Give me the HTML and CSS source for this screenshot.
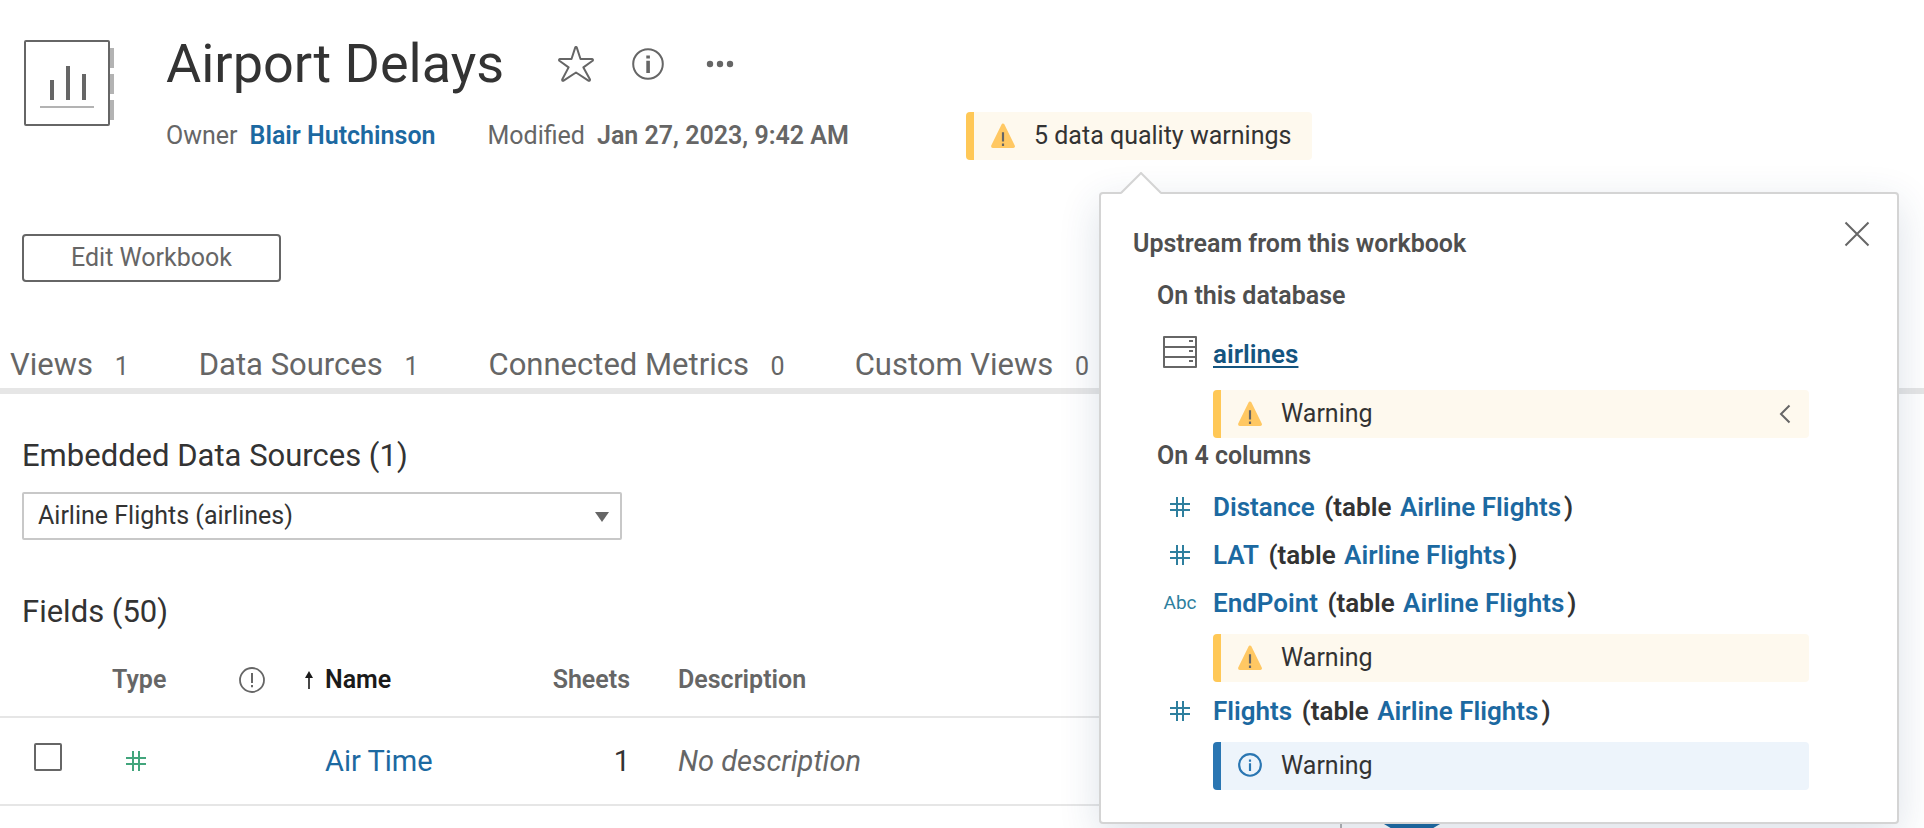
FILE: index.html
```html
<!DOCTYPE html>
<html lang="en">
<head>
<meta charset="utf-8">
<title>Airport Delays</title>
<link rel="stylesheet" href="styles.css">
</head>
<body>
<svg class="sprite" aria-hidden="true">
  <symbol id="i-warn" viewBox="0 0 24 24">
    <path d="M12 2 21.500 21.500H2.500Z" fill="#ffc863" stroke="#ffc863" stroke-width="3" stroke-linejoin="round"/>
    <path d="M12 8.500v8.500M12 19v2.200" stroke="#666" stroke-width="2" fill="none"/>
  </symbol>
  <symbol id="i-num" viewBox="0 0 20 20">
    <path d="M7 0v20M13 0v20M0 7h20M0 13h20" stroke="currentColor" stroke-width="2" fill="none"/>
  </symbol>
</svg>
<div class="page">
  <header class="head">
    <svg class="book" viewBox="0 0 90 86" aria-hidden="true">
      <path d="M86 8h4v20h-4zM86 34h4v20h-4zM86 60h4v20h-4z" fill="#b3b3b3"/>
      <rect x="1" y="1" width="84" height="84" rx="1" fill="#fff" stroke="#666" stroke-width="2"/>
      <path d="M28 40v20M44 26v34M60 34v26" stroke="#666" stroke-width="4"/>
      <path d="M16 67h54" stroke="#b3b3b3" stroke-width="2"/>
    </svg>
    <div class="head-text">
      <div class="title-row">
        <h1>Airport Delays</h1>
        <button class="icon-btn star" aria-label="Favorite"><svg width="36" height="36" viewBox="0 0 36 36"><path d="M17.200 1.600q.8-1.300 1.600 0L22.500 13 34 13q1.600.5.600 1.800L25.400 21.400 32 33.500q0 1.700-1.600 1.200L18 26.500 5.600 34.700Q4 35.200 4.200 33.500L10.600 21.400 1.400 14.800Q.4 13.500 2 13L13.500 13Z" fill="none" stroke="#666" stroke-width="2" stroke-linejoin="round"/></svg></button>
        <button class="icon-btn info" aria-label="Details"><svg width="32" height="32" viewBox="0 0 32 32"><circle cx="16" cy="16" r="14.800" fill="none" stroke="#666" stroke-width="2"/><path d="M14.300 7.500h3.600v3h-3.600zM14.300 12.800h3.600V25h-3.600z" fill="#666"/></svg></button>
        <button class="icon-btn more" aria-label="More actions"><svg width="28" height="8" viewBox="0 0 28 8"><circle cx="4" cy="4" r="3.200" fill="#666"/><circle cx="14" cy="4" r="3.200" fill="#666"/><circle cx="24" cy="4" r="3.200" fill="#666"/></svg></button>
      </div>
      <div class="meta-row">
        <span>Owner</span><a class="owner" href="#">Blair Hutchinson</a>
        <span class="modified">Modified</span><b>Jan 27, 2023, 9:42 AM</b>
      </div>
    </div>
    <div class="quality">
      <button class="notice notice-warn notice-btn"><svg class="n-icon"><use href="#i-warn"/></svg>5 data quality warnings</button>
      <section class="popover" aria-label="Data quality warnings">
        <svg class="pointer" viewBox="0 0 42 22" aria-hidden="true"><path d="M1 22 21 2 41 22Z" fill="#fff"/><path d="M1 21 21 1 41 21" fill="none" stroke="#d4d4d4" stroke-width="2"/></svg>
        <button class="close" aria-label="Close"><svg width="26" height="26" viewBox="0 0 26 26"><path d="M1.500 1.500l23 23M24.500 1.500l-23 23" stroke="#666" stroke-width="2"/></svg></button>
        <h2>Upstream from this workbook</h2>
        <h3>On this database</h3>
        <div class="asset database">
          <svg width="34" height="32" viewBox="0 0 34 32" aria-hidden="true"><path d="M1 1h32v30H1zM1 11h32M1 21h32" fill="none" stroke="#666" stroke-width="2" stroke-linejoin="round"/><path d="M26 5h4M26 15h4M26 25h4" stroke="#666" stroke-width="2"/></svg>
          <a class="db-link" href="#">airlines</a>
        </div>
        <div class="notice notice-warn"><svg class="n-icon"><use href="#i-warn"/></svg>Warning
          <button class="chev" aria-label="Expand"><svg width="12" height="20" viewBox="0 0 12 20"><path d="M10.500 1.500 2 10l8.500 8.500" fill="none" stroke="#666" stroke-width="2"/></svg></button>
        </div>
        <h3 class="tight">On 4 columns</h3>
        <div class="asset"><svg class="num"><use href="#i-num"/></svg><p><a href="#">Distance</a> (table <a href="#">Airline Flights</a>)</p></div>
        <div class="asset"><svg class="num"><use href="#i-num"/></svg><p><a href="#">LAT</a> (table <a href="#">Airline Flights</a>)</p></div>
        <div class="asset"><span class="abc">Abc</span><p><a href="#">EndPoint</a> (table <a href="#">Airline Flights</a>)</p></div>
        <div class="notice notice-warn"><svg class="n-icon"><use href="#i-warn"/></svg>Warning</div>
        <div class="asset after"><svg class="num"><use href="#i-num"/></svg><p><a href="#">Flights</a> (table <a href="#">Airline Flights</a>)</p></div>
        <div class="notice notice-info"><svg class="n-icon" viewBox="0 0 24 24"><circle cx="12" cy="11" r="10" fill="none" stroke="#2a76b2" stroke-width="2"/><path d="M12 6v2M12 9.500v7" stroke="#2a76b2" stroke-width="2"/></svg>Warning</div>
      </section>
    </div>
  </header>

  <div class="actions"><button class="edit">Edit Workbook</button></div>

  <nav class="tabs">
    <a href="#">Views <small>1</small></a>
    <a href="#">Data Sources <small>1</small></a>
    <a href="#">Connected Metrics <small>0</small></a>
    <a href="#">Custom Views <small>0</small></a>
  </nav>

  <div class="content">
    <main>
      <h2 class="section"><label for="source">Embedded Data Sources (1)</label></h2>
      <div class="select-wrap">
        <select id="source"><option>Airline Flights (airlines)</option></select>
        <svg class="caret" viewBox="0 0 14 10" aria-hidden="true"><path d="M0 0h14L7 10z" fill="#666"/></svg>
      </div>
      <h2 class="section fields">Fields (50)</h2>
      <table>
        <thead><tr>
          <th class="c-check"></th>
          <th class="c-type">Type</th>
          <th class="c-warn"><svg width="26" height="26" viewBox="0 0 26 26" role="img" aria-label="Warnings"><circle cx="13" cy="13" r="12" fill="none" stroke="#666" stroke-width="1.800"/><path d="M13 6v10M13 18v2.200" stroke="#666" stroke-width="2"/></svg></th>
          <th class="c-sort"><svg width="8" height="18" viewBox="0 0 8 18" aria-hidden="true"><path d="M4 3v15" stroke="#1a1a1a" stroke-width="1.600"/><path d="M4 0l4 7H0z" fill="#1a1a1a"/></svg></th>
          <th class="c-name">Name</th>
          <th class="c-sheets">Sheets</th>
          <th class="c-desc">Description</th>
        </tr></thead>
        <tbody><tr>
          <td class="c-check"><input type="checkbox" aria-label="Select Air Time"></td>
          <td class="c-type"><svg class="num"><use href="#i-num"/></svg></td>
          <td></td>
          <td></td>
          <td><a href="#">Air Time</a></td>
          <td class="c-sheets">1</td>
          <td class="c-desc"><em>No description</em></td>
        </tr></tbody>
      </table>
    </main>
    <aside><div class="bubble"></div></aside>
  </div>
</div>
</body>
</html>
```
FILE: styles.css
```css
* { box-sizing: border-box; }
body {
  margin: 0;
  background: #fff;
  color: #333;
  font: 400 25px/32px Roboto, "Liberation Sans", sans-serif;
}
h1, h2, h3, p { margin: 0; }
a { color: #1c69a1; text-decoration: none; }
button {
  margin: 0;
  padding: 0;
  border: 0;
  background: none;
  color: inherit;
  font: inherit;
}
svg { display: block; flex: none; }
.sprite { position: absolute; width: 0; height: 0; }
.page {
  display: flex;
  flex-direction: column;
  height: 100vh;
  overflow: hidden;
}

/* Header */
.head { display: flex; align-items: flex-start; padding: 32px 24px 0; }
.book { width: 90px; height: 86px; margin: 8px 52px 0 0; }
.head-text { width: 800px; }
.title-row { display: flex; align-items: center; height: 64px; }
h1 { font-weight: 400; font-size: 54px; line-height: 64px; width: 392px; white-space: nowrap; }
.star { margin-right: 38px; }
.info { margin-right: 42px; }
.meta-row {
  display: flex;
  align-items: baseline;
  margin-top: 24px;
  color: #666;
  white-space: nowrap;
}
.meta-row b { font-weight: 600; margin-left: 12px; }
.owner { font-weight: 600; margin: 0 52px 0 12px; }

/* Notices */
.notice {
  display: flex;
  align-items: center;
  height: 48px;
  padding: 0 18px 0 16px;
  border-left: 8px solid;
  border-radius: 4px;
  color: #333;
  white-space: nowrap;
}
.notice-warn { background: #fef9ee; border-left-color: #ffc857; }
.notice-info { background: #edf4fb; border-left-color: #2a76b2; }
.notice-btn { width: 346px; }
.n-icon { width: 26px; height: 26px; margin-right: 18px; }
.quality { position: relative; margin-top: 80px; }

/* Popover */
.popover {
  position: absolute;
  z-index: 2;
  top: 80px;
  left: 133px;
  width: 800px;
  padding: 34px 88px 32px 32px;
  background: #fff;
  border: 2px solid #d4d4d4;
  border-radius: 4px;
  box-shadow: 0 12px 40px rgba(40, 70, 110, .16);
}
.pointer { position: absolute; top: -22px; left: 19px; width: 42px; height: 22px; }
.close { position: absolute; top: 27px; right: 27px; }
.popover h2, .popover h3 { font-size: 25px; line-height: 32px; font-weight: 600; color: #4f4f4f; }
.popover h3 { margin: 20px 0 0 24px; }
.popover h3.tight { margin-top: 2px; }
.popover .notice { margin-left: 80px; }
.popover .asset + .notice { margin-top: 15px; }
.asset {
  display: grid;
  grid-template-columns: 34px 1fr;
  column-gap: 16px;
  align-items: center;
  height: 32px;
  margin: 16px 0 0 30px;
  font-size: 26px;
  font-weight: 600;
  white-space: nowrap;
}
.asset p a { margin-right: 3px; }
.asset p a + a { margin-left: 2px; }
.popover h3.tight + .asset { margin-top: 19px; }
.asset.after { margin-top: 13px; }
.asset.database { margin-top: 24px; }
.popover .database + .notice { margin-top: 22px; }
.num { width: 20px; height: 20px; color: #2e7f9e; justify-self: center; }
.abc { color: #2e7f9e; font-size: 19px; font-weight: 400; justify-self: center; }
.db-link {
  justify-self: start;
  line-height: 28px;
  padding-top: 4px;
  color: #14547f;
  text-decoration: underline;
  text-underline-offset: 3px;
  text-decoration-thickness: 2px;
}
.chev { margin: 0 0 0 auto; }

/* Actions and tabs */
.actions { padding: 74px 22px 0; }
.edit {
  width: 259px;
  height: 48px;
  border: 2px solid #666;
  border-radius: 4px;
  color: #666;
}
.tabs {
  display: flex;
  align-items: flex-start;
  gap: 70px;
  height: 64px;
  margin-top: 48px;
  padding: 13px 10px 0;
  border-bottom: 6px solid #e6e6e6;
}
.tabs a { color: #666; font-size: 31px; line-height: 44px; white-space: nowrap; }
.tabs small { font-size: 25px; margin-left: 14px; }

/* Content */
.content { flex: 1; display: flex; min-height: 0; }
main { flex: 1; min-width: 0; }
aside { width: 584px; border-left: 2px solid #b3b3b3; margin-top: 100px; }
.bubble { width: 96px; height: 96px; margin: 243px 0 0 22px; border-radius: 50%; background: #1c69a1; }
.section { padding: 0 22px; margin-top: 42px; font-size: 31px; line-height: 40px; font-weight: 400; }
.select-wrap { position: relative; width: 600px; margin: 16px 0 0 22px; }
select {
  appearance: none;
  display: block;
  width: 100%;
  height: 48px;
  padding: 0 14px;
  border: 2px solid #c8c8c8;
  border-radius: 2px;
  background: #fff;
  color: #333;
  font: inherit;
}
.caret { position: absolute; right: 13px; top: 20px; width: 14px; height: 10px; }
.fields { margin-top: 52px; }
table { width: 100%; margin-top: 11px; border-collapse: collapse; table-layout: fixed; }
tr { border-bottom: 2px solid #e6e6e6; }
th { height: 74px; padding: 0; text-align: left; font-weight: 600; color: #666; }
td { height: 88px; padding: 0; font-size: 29px; }
.c-check { width: 112px; padding-left: 34px; }
td.c-check { padding-bottom: 8px; }
.c-type { width: 127px; }
td.c-type { padding-left: 14px; }
td .num { color: #42a57c; justify-self: start; }
.c-warn { width: 66px; }
.c-sort { width: 20px; }
.c-name { width: 200px; color: #1a1a1a; }
.c-sheets { width: 105px; text-align: right; }
.c-desc { padding-left: 48px; }
em { color: #666; }
input[type="checkbox"] {
  appearance: none;
  display: block;
  width: 28px;
  height: 28px;
  margin: 0;
  border: 2px solid #666;
  border-radius: 2px;
  background: #fff;
}
```
